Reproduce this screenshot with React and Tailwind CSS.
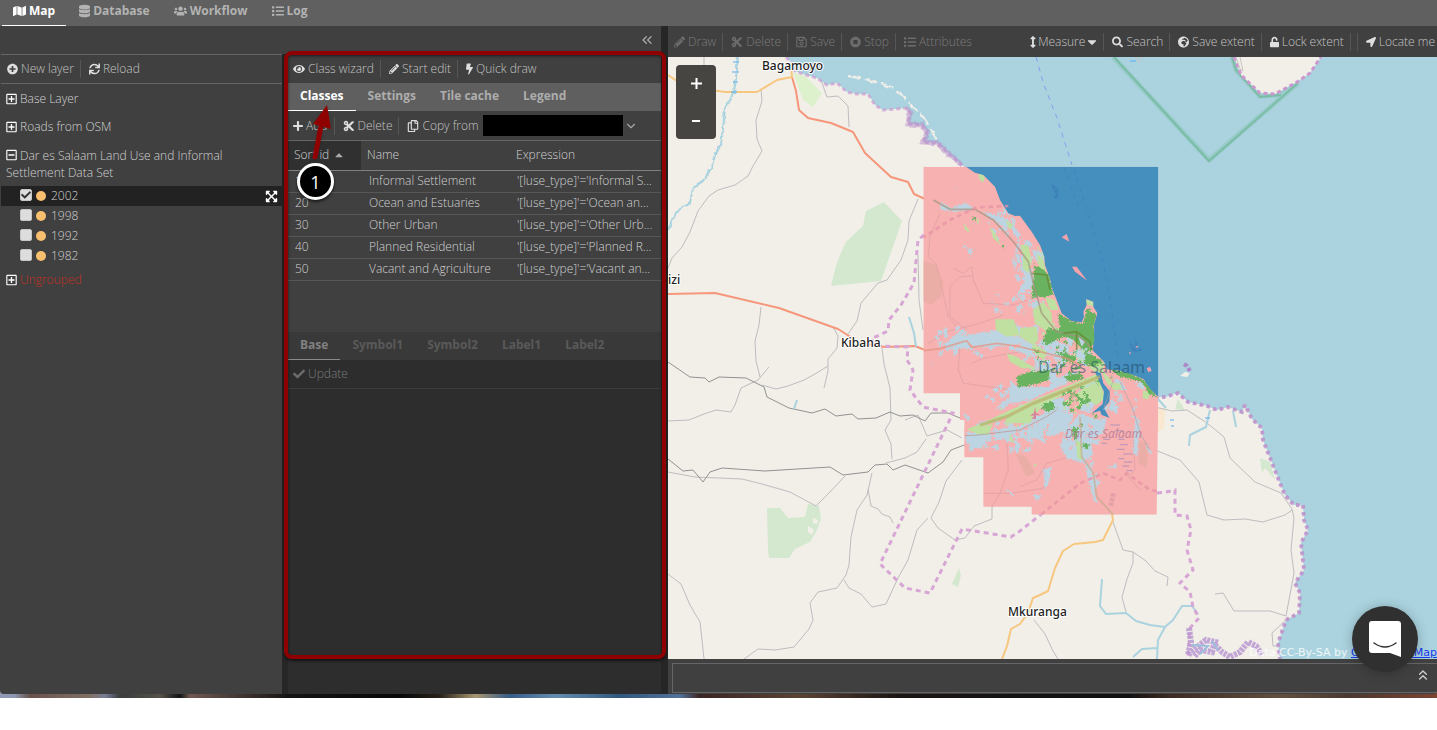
import React from "react";
import {
  FaMap, FaDatabase, FaUsers, FaList, FaPlusCircle, FaSync, FaEye, FaPencilAlt, FaBolt,
  FaPlus, FaCut, FaRegCopy, FaCheck, FaExpandArrowsAlt, FaRegPlusSquare, FaRegMinusSquare,
  FaSearch, FaGlobeAfrica, FaUnlock, FaLocationArrow, FaRegSave, FaArrowsAltV, FaCaretDown,
  FaStopCircle, FaCaretUp,
} from "react-icons/fa";
import { ChevronDown, ChevronsLeft, ChevronsUp } from "lucide-react";

function Tool({ icon: Icon, iconWidth = "w-[11px]", pad = "pl-2 pr-1.5", children, last = false, disabled = false }) {
  return (
    <button
      type="button"
      disabled={disabled}
      className={`flex h-[18px] shrink-0 items-center gap-[3px] whitespace-nowrap ${pad} ${last ? "" : "border-r border-[#565656]"} ${disabled ? "text-[#7b7b7b]" : "text-[#c4c4c4]"}`}
    >
      <Icon className={`h-3 ${iconWidth} ${disabled ? "text-[#6c6c6c]" : "text-[#dedede]"}`} />
      {children}
    </button>
  );
}

function MainTab({ icon: Icon, iconWidth, active = false, children }) {
  return (
    <button
      type="button"
      className={`flex h-[26px] items-center gap-[3px] border-b px-[11px] pb-1 font-bold ${active ? "border-white text-white" : "border-transparent text-[#b3b3b3]"}`}
    >
      <Icon className={`h-3.5 ${iconWidth}`} />
      {children}
    </button>
  );
}

function Layer({ name, checked = false }) {
  return (
    <li className={`flex h-5 items-center justify-between pr-1 pl-[19px] ${checked ? "bg-[#222222]" : ""}`}>
      <label className="flex items-center">
        <span className="relative mb-[3px] block size-3">
          <input
            type="checkbox"
            defaultChecked={checked}
            className="peer block size-3 appearance-none rounded-[2px] border border-[#c5c5c5] bg-[#dddddd]"
          />
          <FaCheck className="pointer-events-none absolute inset-0 m-auto hidden size-2.5 text-[#333333] peer-checked:block" />
        </span>
        <span className="mr-[5px] ml-1 size-2.5 rounded-full bg-[#f8bf6e]" />
        {name}
      </label>
      {checked && <FaExpandArrowsAlt className="size-[13px] text-white" />}
    </li>
  );
}

const groupClass = "flex items-center gap-[3px] text-left";

function LayerPanel() {
  return (
    <aside className="flex w-[282px] shrink-0 flex-col pl-px">
      <div className="flex h-[30px] items-center border-y border-[#666666]">
        <Tool icon={FaPlusCircle} pad="pl-1.5 pr-1.5">New layer</Tool>
        <Tool icon={FaSync} last>Reload</Tool>
      </div>
      <ul className="flex flex-col pt-[7px]">
        <li className="h-7 px-[5px]">
          <button type="button" className={groupClass}>
            <FaRegPlusSquare className="h-3 w-[11px] text-white" />Base Layer
          </button>
        </li>
        <li className="h-7 px-[5px]">
          <button type="button" className={groupClass}>
            <FaRegPlusSquare className="h-3 w-[11px] text-white" />Roads from OSM
          </button>
        </li>
        <li>
          <button type="button" className="px-[5px] text-left leading-[17px]">
            <FaRegMinusSquare className="mr-[3px] inline h-3 w-[11px] align-[-1px] text-white" />
            Dar es Salaam Land Use and Informal Settlement Data Set
          </button>
          <ul className="mt-[5px]">
            <Layer name="2002" checked />
            <Layer name="1998" />
            <Layer name="1992" />
            <Layer name="1982" />
          </ul>
        </li>
        <li className="mt-1.5 px-[5px] text-[#c0301f]">
          <button type="button" className={groupClass}>
            <FaRegPlusSquare className="h-3 w-[11px] text-white" />Ungrouped
          </button>
        </li>
      </ul>
    </aside>
  );
}

const classes = [
  ["10", "Informal Settlement", "'[luse_type]'='Informal S..."],
  ["20", "Ocean and Estuaries", "'[luse_type]'='Ocean an..."],
  ["30", "Other Urban", "'[luse_type]'='Other Urb..."],
  ["40", "Planned Residential", "'[luse_type]'='Planned R..."],
  ["50", "Vacant and Agriculture", "'[luse_type]'='Vacant an..."],
];

function SubTab({ active = false, muted = false, children }) {
  const tone = muted
    ? active ? "border-[#8a8a8a] text-[#818181]" : "border-transparent text-[#595959]"
    : active ? "border-white text-white" : "border-transparent text-[#adadad]";
  return <button type="button" className={`border-b px-3 pb-0.5 font-bold ${tone}`}>{children}</button>;
}

function ClassPanel() {
  return (
    <section className="relative flex min-w-0 flex-1 flex-col border-r-[7px] border-l-[6px] border-[#262626] bg-[#2d2d2d]">
      <div className="flex h-[29px] items-center bg-[#404040]">
        <Tool icon={FaEye} iconWidth="w-3" pad="pl-[5px] pr-1.5">Class wizard</Tool>
        <Tool icon={FaPencilAlt} iconWidth="w-2.5">Start edit</Tool>
        <Tool icon={FaBolt} iconWidth="w-[7px]" last>Quick draw</Tool>
      </div>
      <div className="flex h-7 bg-[#5f5f5f]">
        <SubTab active>Classes</SubTab>
        <SubTab>Settings</SubTab>
        <SubTab>Tile cache</SubTab>
        <SubTab>Legend</SubTab>
      </div>
      <div className="flex h-[30px] items-center border-b border-[#666666] bg-[#404040]">
        <Tool icon={FaPlus} iconWidth="w-2.5" pad="pl-[5px] pr-1.5">Add</Tool>
        <Tool icon={FaCut} iconWidth="w-3">Delete</Tool>
        <label htmlFor="copy-from" className="flex items-center gap-[3px] pr-1 pl-2 text-[#c4c4c4]">
          <FaRegCopy className="size-3 text-[#dedede]" />
          Copy from
        </label>
        <select id="copy-from" className="h-[21px] w-[140px] appearance-none bg-black" />
        <ChevronDown className="ml-px size-3.5 text-[#a5a5a5]" strokeWidth={2} />
      </div>
      <div className="h-[191px] bg-[#404040]">
        <table className="w-full table-fixed border-collapse text-left">
          <colgroup>
            <col className="w-[73px]" />
            <col className="w-[148px]" />
            <col />
          </colgroup>
          <thead>
            <tr className="h-[29px] border-b border-[#808080]">
              <th className="bg-[#303030] pl-1.5 font-light">
                <span className="flex items-center gap-1">Sort id <FaCaretUp className="size-3 text-[#aaaaaa]" /></span>
              </th>
              <th className="pl-1.5 font-light">Name</th>
              <th className="pl-[7px] font-light">Expression</th>
            </tr>
          </thead>
          <tbody>
            {classes.map(([id, name, expression]) => (
              <tr key={id} className="h-[22px] border-b border-[#575757]">
                <td className="pl-[7px]">{id}</td>
                <td className="pl-2">{name}</td>
                <td className="pl-2 whitespace-nowrap">{expression}</td>
              </tr>
            ))}
          </tbody>
        </table>
      </div>
      <div className="flex h-7 bg-[#393939]">
        <SubTab active muted>Base</SubTab>
        <SubTab muted>Symbol1</SubTab>
        <SubTab muted>Symbol2</SubTab>
        <SubTab muted>Label1</SubTab>
        <SubTab muted>Label2</SubTab>
      </div>
      <div className="flex h-[29px] items-center border-b border-[#3d3d3d]">
        <Tool icon={FaCheck} iconWidth="w-3" pad="pl-[5px]" last disabled>Update</Tool>
      </div>
      <div className="pointer-events-none absolute -top-[3px] -right-[5px] bottom-[35px] -left-1 rounded-lg border-4 border-[#8f0000] shadow-[0_2px_3px_rgba(0,0,0,0.6),inset_0_1px_3px_rgba(0,0,0,0.6)]" />
      <svg className="pointer-events-none absolute top-[50px] left-4 drop-shadow" width="36" height="60" viewBox="304 105 36 60" aria-hidden="true">
        <path d="M315 158L321 127" stroke="#8f0000" strokeWidth="5" strokeLinecap="round" />
        <path d="M327 106L313 125L331 130Z" fill="#8f0000" />
      </svg>
      <span className="absolute top-[109px] left-[9px] flex size-[37px] items-center justify-center rounded-full border-[3px] border-white bg-black text-lg font-normal text-white shadow-[0_2px_3px_rgba(0,0,0,0.6)]">1</span>
    </section>
  );
}

/* Small irregular parcels scattered over an ellipse: [cx, cy, rx, ry, count, size]. */
function parcels(zones, seed) {
  let state = seed;
  const random = () => {
    state = (state * 16807) % 2147483647;
    return state / 2147483647;
  };
  let d = "";
  for (const [cx, cy, rx, ry, count, size] of zones) {
    for (let i = 0; i < count; i += 1) {
      const turn = random() * Math.PI * 2;
      const reach = Math.sqrt(random());
      const x = cx + Math.cos(turn) * rx * reach;
      const y = cy + Math.sin(turn) * ry * reach;
      const points = [];
      for (let k = 0; k < 6; k += 1) {
        const angle = (k / 6) * Math.PI * 2;
        const r = size * (0.3 + random() * 0.9);
        points.push(`${Math.round(x + Math.cos(angle) * r)} ${Math.round(y + Math.sin(angle) * r)}`);
      }
      d += `M${points.join("L")}Z`;
    }
  }
  return d;
}

const settlements = parcels([
  [165, 575, 65, 45, 34, 8], [310, 225, 45, 50, 26, 8], [370, 330, 28, 80, 26, 8], [390, 460, 50, 40, 24, 8],
  [440, 610, 80, 55, 34, 11], [350, 740, 90, 40, 26, 9], [330, 850, 110, 50, 44, 11], [470, 820, 70, 50, 26, 12],
  [540, 860, 60, 70, 30, 10], [270, 590, 70, 30, 18, 9], [640, 750, 30, 40, 9, 7], [710, 820, 12, 90, 10, 6],
  [240, 870, 50, 30, 16, 9], [580, 980, 20, 60, 12, 7], [205, 300, 20, 20, 4, 5], [290, 460, 40, 30, 8, 5],
], 71);
const openLand = parcels([
  [400, 650, 70, 50, 14, 5], [480, 550, 50, 40, 14, 6], [350, 800, 70, 40, 14, 5], [540, 740, 60, 50, 24, 6],
  [480, 480, 60, 60, 12, 5], [550, 590, 40, 50, 16, 6], [420, 310, 15, 50, 8, 5],
], 133);
const planned = parcels([
  [520, 600, 50, 60, 24, 7], [530, 745, 50, 40, 22, 8], [500, 660, 50, 30, 16, 6], [420, 640, 25, 25, 6, 4], [600, 690, 40, 20, 6, 4],
], 29);
const gaps = parcels([
  [430, 620, 90, 60, 20, 6], [300, 820, 120, 60, 24, 7], [500, 850, 80, 50, 16, 6], [390, 480, 60, 60, 20, 6],
  [520, 590, 50, 60, 14, 5], [540, 740, 60, 50, 12, 5], [170, 575, 60, 35, 10, 6],
], 977);

/* Each region group is drawn on its own grid, three units to a map pixel. */
function MapDrawing() {
  const coast = "M786 57L792 63L795 71L803 74L817 78L827 85L837 83L847 92L857 94L868 94L875 105L883 110L907 108L910 113L908 124L922 125L927 132L923 142L937 143L950 155L962 165L972 173L995 190L1008 213L1020 216L1040 245L1045 270L1055 305L1085 322L1090 300L1095 340L1105 362L1130 375L1155 397L1165 397L1178 393L1188 402L1207 406L1217 410L1228 407L1242 412L1245 405L1252 419L1262 428L1263 440L1280 483L1285 495L1294 505L1303 505L1304 520L1308 530L1301 543L1304 570L1295 583L1300 593L1299 613L1286 620L1278 643L1280 659";
  const eastCoast = "M1155 397L1165 397L1178 393L1188 402L1207 406L1217 410L1228 407L1242 412L1245 405L1252 419L1262 428L1263 440L1280 483L1285 495L1294 505L1303 505L1304 520L1308 530L1301 543L1304 570L1295 583L1300 593L1299 613L1286 620L1278 643L1280 659";
  return (
    <svg className="block h-full w-full" viewBox="668 57 769 602" preserveAspectRatio="xMinYMin slice" fill="none" role="img" aria-label="Map of Dar es Salaam">
      <defs>
        <filter id="ragged" x="-5%" y="-5%" width="110%" height="110%">
          <feTurbulence type="fractalNoise" baseFrequency="0.16" numOctaves="3" seed="4" result="n" />
          <feDisplacementMap in="SourceGraphic" in2="n" scale="16" xChannelSelector="R" yChannelSelector="G" />
        </filter>
        <filter id="rough" x="-5%" y="-5%" width="110%" height="110%">
          <feTurbulence type="fractalNoise" baseFrequency="0.2" numOctaves="2" seed="9" result="n" />
          <feDisplacementMap in="SourceGraphic" in2="n" scale="4" xChannelSelector="R" yChannelSelector="G" />
        </filter>
        <clipPath id="survey"><path d="M70 50H775V738L770 1094H395V1070H250V922H193V810H180V730H70Z" /></clipPath>
      </defs>
      <rect x="668" y="57" width="769" height="602" fill="#aad3df" />
      <path d={`${coast}L668 659V57Z`} fill="#f2efe9" />

      {/* parks */}
      <g fill="#d3e8cf">
        <path d="M884 202L902 221L881 281L831 286L836 266L840 255L846 242L863 226L866 211Z" />
        <path d="M767 508L780 508L788 518L805 517L808 504L819 506L821 519L816 532L810 542L795 549L789 558L769 558L768 550Z" />
        <path d="M959 568L961 575L958 587L952 584Z" />
        <path d="M1260 458L1270 462L1275 480L1265 468L1262 473Z" />
        <path d="M1178 399L1185 410L1175 409Z" />
      </g>
      <path d="M813 518l5 2-1 4-4-1zM808 526l6 4-2 5-4-3z" fill="#f2efe9" />
      <path d="M793 73L805 76L822 93L813 107L803 100Z" fill="#def1cd" />
      <path d="M1155 405L1165 410L1164 428L1156 433Z" fill="#f9e7d0" />

      {/* minor roads and railways */}
      <g stroke="#bdbdbf" strokeWidth="1">
        <path d="M704 57V88" />
        <path d="M761 89L762 101L756 120L757 139L762 151L753 166L748 176L735 185L718 190L709 196L698 211L690 232L682 247L672 258L668 268" />
        <path d="M821 80L827 97L838 96L848 106L849 127" />
        <path d="M918 199L909 221L908 240L901 260L887 280L878 283L861 303L857 321L848 334" />
        <path d="M761 307L759 325L755 341L756 361L760 377M833 327L838 336L837 348L828 359L828 371L824 388M828 366L815 374L804 380L788 386L776 389L762 385M769 367L758 380L741 388L735 405L731 412L716 410L704 414L689 420L668 421" />
        <path d="M882 348L884 364L890 388L891 420L885 430L891 444L892 459M668 472L695 477L742 479L762 484L790 492L816 506L828 494L845 476" />
        <path d="M872 473L867 495L857 510L851 537L849 565L846 575L837 588L818 592L810 603L813 620L809 629L794 647L775 650L758 649L744 659" />
        <path d="M844 580L849 588L861 594L872 607L886 604L898 578L908 560L917 530L928 518M668 574L681 584L690 605L700 622L702 640L704 659" />
        <path d="M962 460L946 481L939 502L931 518L938 528L955 540L965 538L974 526L992 519L992 507L1005 499M1113 522L1123 550L1133 552L1146 561L1155 571L1168 577L1167 586M1133 552L1133 563L1127 579L1122 597L1126 612M868 489L871 506L878 509L882 514L890 517L893 523" />
        <path d="M1155 407L1172 411L1187 410L1207 423L1224 437L1230 458L1255 482L1281 493L1292 509L1294 518L1291 550L1294 573L1286 616L1270 611L1234 611L1223 593L1215 594M1155 450L1180 460L1199 482L1207 515L1224 520L1245 519L1263 522L1285 515L1292 510" />
        <path d="M1034 620L1045 634L1053 651L1058 659" />
        <path d="M905 420L918 415L927 436L947 430L962 438M886 463L905 458L917 452L926 439" />
        <path d="M918 255L919 300L923 330M1286 620L1272 633L1273 646L1279 646" />
      </g>
      <g stroke="#929292" strokeWidth="1">
        <path d="M668 362L690 377L705 378L709 382L719 377L746 378L764 387L767 397L789 408L812 413L825 409L836 416L852 414L858 419L876 418L890 412L900 416L913 415L925 421L931 413L948 413L960 418" />
        <path d="M668 459L683 471L693 470L703 482L710 472L722 468L765 471L830 467L843 475L868 472L875 465L887 464L893 470L905 465L928 473L943 462L951 450L967 444" />
      </g>

      {/* primary roads */}
      <g stroke="#f6967a" strokeWidth="2" strokeLinejoin="round">
        <path d="M668 294L715 293L779 308L838 329L860 343L885 347L915 346L925 350" />
        <path d="M792 77L796 91L799 110L808 118L831 123L853 132L865 153L891 177L908 182L914 194L925 199" />
      </g>
      <g stroke="#f7c77f" strokeWidth="2" strokeLinejoin="round">
        <path d="M668 75L680 83L704 89L725 92L757 92L777 80L792 77L791 66" />
        <path d="M1112 514L1113 520L1103 540L1095 542L1074 544L1063 551L1055 568L1048 591L1040 595L1033 598L1028 613L1020 624L1011 629L1007 646L1002 659" />
      </g>

      {/* rivers */}
      <g stroke="#aad3df" strokeWidth="2" strokeLinejoin="round">
        <path filter="url(#rough)" d="M738 57L736 78L734 92L730 100L725 108L723 130L721 145L715 155L711 169L703 181L693 188L690 203L677 211L668 230" />
        <path d="M909 317L914 333L916 347M797 400L794 409M1102 579L1100 606L1106 614L1126 613L1136 621L1150 625L1165 627L1173 620L1182 606L1192 606L1198 614M1165 627L1158 640L1157 659M1157 648L1142 649L1133 657" />
        <path d="M1210 410L1206 427L1190 435L1189 446M1233 411L1236 427M1157 398L1166 408" />
      </g>
      <path d="M733 62h6M732 72h7M733 82h5M731 92h6M1170 420h4M1171 426h3M1205 418h5M1130 61h6" stroke="#5aaef0" strokeWidth="1" />

      {/* district and sea borders */}
      <path d={coast} stroke="#cc9fd4" strokeWidth="3" strokeDasharray="4 3" strokeLinejoin="round" opacity=".75" />
      <path d={eastCoast} stroke="#b68cc8" strokeWidth="4" strokeDasharray="3 4" opacity=".65" />
      <path d="M907 108L910 113L908 124L922 125L927 132L923 142L937 143L950 155L962 165" stroke="#b68cc8" strokeWidth="5" opacity=".5" filter="url(#rough)" />
      <g stroke="#d7a6d5" strokeWidth="3" strokeDasharray="5 4">
        <path d="M924 235L918 240L914 283L901 305L889 320L888 331L871 339L875 346L908 347L907 360L913 370L910 390L923 407L953 413L880 564L905 588L930 593L962 529L1011 537L1020 531L1078 485" />
        <path d="M1157 493L1166 492L1175 490L1175 515L1187 516L1191 530L1187 550L1193 570L1180 583L1190 592L1193 607L1199 618L1190 628L1188 657" />
      </g>
      <path d="M1189 628L1191 642L1188 655L1196 648L1206 640L1215 642L1212 652L1200 650L1194 657M1215 645L1222 652L1230 657L1240 652L1248 642L1256 646L1262 655" stroke="#b594cf" strokeWidth="6" strokeDasharray="3 1" opacity=".8" />
      <path d="M1192 645L1208 646L1200 654M1212 641L1218 650" stroke="#9bbfdc" strokeWidth="2" />

      {/* islands and marine features */}
      <path d="M848 76L868 80L894 88L912 105L925 119L937 140" stroke="#f2efe9" strokeWidth="2" strokeDasharray="13 4" filter="url(#rough)" />
      <path d="M1113 57L1209 160L1298 83M1232 57L1236 70L1260 96L1281 95L1298 83" stroke="#79bea4" strokeWidth="5" opacity=".35" />
      <path d="M1114 57L1209 161L1298 83M1232 57L1236 70L1260 97L1281 95" stroke="#70b89a" strokeWidth="2" opacity=".75" />
      <path d="M1234 57L1241 75L1260 93L1275 94L1297 82L1310 73L1321 57Z" fill="#f2efe9" />
      <path d="M1234 57L1241 75L1260 93L1275 94L1297 82L1310 73L1321 57" stroke="#cc96d0" strokeWidth="3" strokeDasharray="4 3" />
      <path d="M1236 57L1240 69L1243 71L1240 57M1136 57l3 5 3-5" stroke="#c7c5c3" />
      <path d="M1036 57L1044 85L1057 118L1072 165" stroke="#8d9cec" strokeDasharray="5 5" />
      <path d="M1180 376L1185 372L1190 373L1187 377Z" fill="#f2efe9" />
      <path d="M1184 364L1187 366L1190 371" stroke="#ad88c8" strokeWidth="4" strokeDasharray="4 2" />

      {/* land use survey */}
      <g transform="translate(900 150) scale(.33333)">
        <g clipPath="url(#survey)">
          <rect x="60" y="40" width="720" height="1060" fill="#f6b1b0" />
          <g stroke="#dc9ea4" strokeWidth="3" opacity=".65">
            <path d="M120 190L90 260L85 320L110 345L145 500L170 530M160 355L190 370L215 350L220 390L250 460L340 465L430 435M150 410L180 380L215 378M150 410L150 500L200 540M180 590L175 660L190 700L340 720M215 640L250 625L330 610L410 600M320 860L325 960L300 1030L275 1070M360 1010L410 990L440 940L510 920M240 1030L330 1030L430 1015L450 960M700 870L705 960L685 980L720 1020M85 580L140 545L240 520L310 495" />
          </g>
          <path d="M65 330L110 345L130 400L125 440L90 465L65 450Z M345 910L380 920L405 970L380 980Z M715 870L745 880L740 955L715 940Z" fill="#e4aca0" opacity=".6" />
          <g fill="#bdd5e2" filter="url(#ragged)">
            <path d="M125 155L150 175L195 160L225 175L190 182L150 183L120 178Z M250 185L310 200L340 225L365 260L350 262L330 230L300 225L280 210Z" />
            <path d="M365 310L392 350L400 390L390 430L365 425L345 445L375 390L362 350Z M395 300L430 305L435 330L410 335Z" />
            <path d="M130 585L150 570L190 535L200 560L250 545L300 540L360 560L390 580L280 590L215 590L160 600Z M325 520L390 535L420 520L410 560L350 555Z M280 470L300 480L285 490Z M405 450L430 465L415 500L395 470Z" />
            <path d="M355 590L460 570L500 585L520 620L490 640L440 610L400 620L340 600Z M400 625L440 635L480 690L455 700L410 650Z M520 600L560 595L580 620L560 650L530 630Z" />
            <path d="M330 690L350 710L445 710L480 680L540 660L500 700L400 745L310 770L280 780L330 740Z M430 740L490 745L510 780L460 790L430 770Z" />
            <path d="M200 855L250 840L280 850L240 890L210 905Z M250 850L330 830L370 850L350 880L300 870Z M380 830L430 830L420 870L380 860Z M400 800L470 780L520 790L500 840L450 860L430 835Z" />
            <path d="M500 840L540 790L590 810L620 805L610 850L570 870L580 910L550 940L500 925L480 890Z M540 700L590 690L600 730L570 790L540 780Z" />
            <path d="M635 745L655 770L650 790L625 780Z M640 680L665 695L680 720L655 720Z M705 695L735 700L730 720L715 710Z M705 795L720 830L710 920L700 905Z M555 935L575 955L580 990L600 1000L580 1020L595 1060L580 1050L560 970Z M430 960L455 950L450 985L435 1020Z M320 1020L335 1025L345 1045Z M400 1035L425 1035L410 1055Z M620 955L650 940L650 955Z M190 790L210 800L205 815Z" />
            <path d="M200 290L218 305L208 318Z M90 650L100 630L95 645Z M335 320L352 340L345 360Z M740 880L755 910L745 912Z M365 900L395 890L385 910Z M165 105L172 110L170 117Z M340 230L360 250L340 258Z M265 740L285 745L280 760Z" />
            <path d={settlements} />
          </g>
          <path d={gaps} fill="#f6b1b0" filter="url(#ragged)" />
          <g fill="#bfe0a0" filter="url(#rough)">
            <path d="M235 65L255 80L250 98L238 88Z M190 218L203 235L210 248L196 240Z M268 228L285 250L302 285L280 265Z M230 205L238 210L232 225Z M315 210L340 225L330 240Z" />
            <path d="M362 285L385 285L395 335L385 370L368 355L370 320Z M285 508L340 508L360 555L320 560L288 540Z M360 535L410 530L415 570L400 585L360 560Z M398 480L430 455L455 490L458 530L440 545L405 520Z M435 440L465 450L475 480L450 480Z M400 580L440 605L430 630L395 600Z M320 610L350 620L405 655L365 655L330 635Z" />
            <path d="M460 530L505 540L500 550L470 555Z M410 310L430 330L440 375L420 365Z M580 620L615 640L600 675L570 655Z M600 650L640 700L660 710L650 722L620 700Z M530 730L600 690L615 745L590 765L560 750L540 775Z" />
            <path d="M200 838L250 818L330 780L590 672L600 690L500 730L430 765L400 800L390 820L315 820L320 800L250 830L240 855Z M240 835L278 822L265 855L235 850Z M330 850L342 880L328 870Z M528 870L545 880L545 930L533 925Z M730 720L750 730L745 748L728 745Z M655 655L690 670L660 675Z M635 700L660 700L665 718L640 720Z M405 940L412 945L400 950Z" />
            <path d={openLand} />
          </g>
          <g fill="#69b25f" filter="url(#ragged)">
            <path d="M405 345L440 365L455 400L460 430L440 442L415 440L395 445L400 390Z M475 490L520 515L550 520L560 475L590 495L580 530L590 580L550 600L520 570L490 560L440 585L425 575L445 535L480 540Z" />
            <path d="M350 680L385 665L450 660L445 690L400 705L355 712Z M430 760L455 755L470 775L440 785L425 775Z M490 610L530 620L520 640L485 630Z M560 605L610 635L580 650L550 640Z M490 680L540 670L555 685L510 695Z" />
            <path d="M625 655L690 670L735 690L770 740L750 735L725 695L660 680Z M515 830L535 835L530 875L518 860Z M550 880L570 885L565 895L545 892Z M540 820L548 825L545 840Z M575 790L595 800L590 808Z M218 198L228 205L220 212Z M305 288L315 285L312 298Z M395 595L420 605L412 612Z" />
            <path d={planned} />
          </g>
          <path d="M500 560L520 570L515 590L505 585Z M535 560L555 575L545 590Z M530 600L545 615L540 625Z" fill="#bdd5e2" filter="url(#rough)" />
          <path d="M560 447L580 455L580 470L557 462Z" fill="#bfe0a0" />
          <path d="M190 45L225 68L250 75L285 110L300 150L325 190L345 198L360 197L395 245L420 285L433 320L435 345L450 385L458 420L470 450L485 490L515 513L545 517L552 500L550 485L560 465L558 447L580 455L580 470L592 490L582 525L583 570L577 600L612 635L622 658L660 662L700 675L730 687L752 718L772 738H785V40Z" fill="#458fbf" />
          <path d="M585 665L602 668L610 700L630 725L628 755L612 775L628 803L605 795L600 782L575 790L608 762L612 725L600 700Z" fill="#458fbf" filter="url(#rough)" />
          <g fill="#f3a2ac">
            <path d="M485 262L500 252L508 275Z M516 350L530 350L562 392L525 365Z M740 655L750 650L755 662L745 667Z M688 605l6 4-6 4zM705 588l12 1-8 4z" />
          </g>
          <g stroke="#3c7cb8" strokeWidth="6" opacity=".8" filter="url(#ragged)"><path d="M455 105L470 120L465 145L475 130M690 575L700 600L725 600M705 570L710 590" /></g>
          <path d="M505 5L560 180L610 340L630 450L655 630M470 0L540 180" stroke="#3a7bc2" strokeWidth="3" strokeDasharray="14 14" opacity=".55" />
          <g stroke="#b1a87c" strokeWidth="5" opacity=".7">
            <path d="M100 150L150 178L225 178L280 210L340 275L385 335L400 400L425 490L470 545L540 560L580 600" stroke="#a4937e" />
            <path d="M70 602L120 596L200 572L215 592L290 580L350 588L420 605L500 625L540 645" stroke="#e39281" />
            <path d="M240 825L320 800L400 760L600 680" strokeWidth="10" stroke="#b9b06b" />
            <path d="M540 800L545 920L580 970L590 1040L645 1100" stroke="#c6a98d" />
          </g>
          <path d="M395 370L440 375L450 420M490 550L530 545L570 575L575 600M530 545V600" stroke="#64852e" strokeWidth="5" opacity=".7" />
          <path d="M185 858L235 855L360 840L440 800L470 780" stroke="#bba7a7" strokeWidth="3" />
          <path d="M65 265L150 210L230 172L325 168M365 1140L540 1000L610 970L660 990L680 970L750 1020L785 1025" stroke="#e793a6" strokeWidth="8" strokeDasharray="14 11" opacity=".75" />
          <path d="M640 1030L632 1070" stroke="#dc98a6" strokeWidth="14" strokeDasharray="10 4" opacity=".7" />
          <path d="M630 825h30M645 842h25M655 868h18M660 884h24M650 898h24M670 912h28M655 926h18M672 936h26M668 948h20M680 962h18M610 868h20M605 880h16" stroke="#b793b8" strokeWidth="3" />
          <path d="M660 695L700 780L720 850L750 900M640 690L610 780" stroke="#a6a2ae" strokeWidth="3" opacity=".6" />
          <path d="M405 770L408 788L422 796L408 796L408 808L395 806L403 797L390 797L402 788Z" fill="#d9869c" />
        </g>
      </g>

      {/* place names */}
      <g className="font-['Noto_Sans',sans-serif]" paintOrder="stroke">
        <g fontSize="12" className="font-medium" fill="#222" stroke="#fff" strokeWidth="2" strokeLinejoin="round">
          <text x="762" y="70">Bagamoyo</text>
          <text x="841" y="347">Kibaha</text>
          <text x="1008" y="616">Mkuranga</text>
          <text x="668" y="284">izi</text>
        </g>
        <text x="1038" y="373" fontSize="16" className="font-normal" fill="#1e4663" fillOpacity=".55">Dar es Salaam</text>
        <text x="1065" y="438" fontSize="12" className="font-normal" fontStyle="italic" fill="#b37895" fillOpacity=".8">Dar es Salaam</text>
      </g>
    </svg>
  );
}

function MapPanel() {
  return (
    <main className="flex min-w-0 flex-1 flex-col overflow-hidden">
      <div className="flex h-[31px] shrink-0 items-center justify-between">
        <div className="flex">
          <Tool icon={FaPencilAlt} pad="pl-1.5 pr-1.5" disabled>Draw</Tool>
          <Tool icon={FaCut} iconWidth="w-3" disabled>Delete</Tool>
          <Tool icon={FaRegSave} disabled>Save</Tool>
          <Tool icon={FaStopCircle} disabled>Stop</Tool>
          <Tool icon={FaList} iconWidth="w-3" disabled last>Attributes</Tool>
        </div>
        <div className="flex">
          <button type="button" className="flex h-[18px] items-center gap-0.5 border-r border-[#565656] pr-1.5 text-[#c4c4c4]">
            <FaArrowsAltV className="h-3 w-1.5 text-[#dedede]" />Measure<FaCaretDown className="h-3.5 w-2.5 text-[#dedede]" />
          </button>
          <Tool icon={FaSearch}>Search</Tool>
          <Tool icon={FaGlobeAfrica}>Save extent</Tool>
          <Tool icon={FaUnlock} iconWidth="w-[9px]">Lock extent</Tool>
          <span className="w-[7px] border-r border-[#565656]" />
          <Tool icon={FaLocationArrow} iconWidth="w-2.5" pad="pl-2 pr-0.5" last>Locate me</Tool>
        </div>
      </div>
      <div className="relative min-h-0 flex-1 overflow-hidden">
        <MapDrawing />
        <div className="absolute top-2 left-2 flex h-[74px] w-10 flex-col rounded bg-[#474542]">
          <button type="button" aria-label="Zoom in" className="flex flex-1 items-center justify-center text-white">
            <svg viewBox="0 0 11 11" className="size-[11px]" fill="none" stroke="currentColor" strokeWidth="2"><path d="M0 5.5H11M5.5 0V11" /></svg>
          </button>
          <button type="button" aria-label="Zoom out" className="flex flex-1 items-center justify-center text-white">
            <svg viewBox="0 0 8 8" className="size-2" fill="none" stroke="currentColor" strokeWidth="2"><path d="M0 4H8" /></svg>
          </button>
        </div>
        <p className="absolute right-0 bottom-0 font-[DejaVu_Sans,sans-serif] text-[11px] leading-3 font-normal whitespace-nowrap text-white/80">
          Data CC-By-SA by <a href="#osm" className="text-[#1a35ee] underline">OpenStreetMap</a>
        </p>
      </div>
      <div className="h-[35px] shrink-0 pt-1 pb-px pl-1">
        <div className="flex h-[30px] items-center justify-end border-y border-l border-[#666666] pr-1.5">
          <button type="button" aria-label="Expand panel"><ChevronsUp className="mb-1.5 size-4 text-[#d0d0d0]" strokeWidth={2} /></button>
        </div>
      </div>
    </main>
  );
}

export default function App() {
  return (
    <div className="flex h-screen min-h-[600px] flex-col bg-white pb-8 font-['Open_Sans',sans-serif] text-xs font-light text-[#d2d2d2]">
      <div className="relative flex min-h-0 flex-1 flex-col bg-[linear-gradient(90deg,#8f98b3_0,#8f98b3_14px,#68534c_30px,#817064_90px,#777e96_105px,#393d3c_120px,#55504a_160px,#151515_180px,#705950_190px,#4a3c3a_230px,#151412_290px,#080808_400px,#27211a_440px,#a99670_475px,#355b88_510px,#658caf_555px,#31577e_620px,#53719b_680px,#3a2524_700px,#5c4234_800px,#191513_900px,#111_1128px,#3d2a22_1170px,#62503f_1280px,#4a382f_1350px,#7c4431_1437px)] pb-1">
        <div className="flex min-h-0 flex-1 flex-col rounded-b bg-[#404040]">
          <nav className="flex h-[26px] shrink-0 gap-0.5 bg-[#606060] pl-0.5">
            <MainTab icon={FaMap} iconWidth="w-[13px]" active>Map</MainTab>
            <MainTab icon={FaDatabase} iconWidth="w-[11px]">Database</MainTab>
            <MainTab icon={FaUsers} iconWidth="w-[13px]">Workflow</MainTab>
            <MainTab icon={FaList} iconWidth="w-3">Log</MainTab>
          </nav>
          <div className="flex min-h-0 flex-1">
            <div className="flex w-[668px] shrink-0 flex-col">
              <div className="flex h-7 shrink-0 items-center justify-end border-r-[7px] border-[#262626] pr-1.5">
                <button type="button" aria-label="Collapse panel"><ChevronsLeft className="size-4 text-[#a8a8a8]" strokeWidth={2} /></button>
              </div>
              <div className="flex min-h-0 flex-1">
                <LayerPanel />
                <ClassPanel />
              </div>
            </div>
            <MapPanel />
          </div>
        </div>
        <button type="button" aria-label="Open chat" className="absolute right-[19px] bottom-[26px] flex size-[66px] items-center justify-center rounded-full bg-[#303030] shadow-[0_1px_12px_rgba(0,0,0,0.25)]">
          <svg viewBox="0 0 32 36" className="h-9 w-8" fill="none">
            <path d="M3 0H29Q32 0 32 3V36L21 32H3Q0 32 0 29V3Q0 0 3 0Z" fill="#fff" />
            <path d="M5 22Q16 30 27 22" stroke="#303030" strokeWidth="1.5" strokeLinecap="round" />
          </svg>
        </button>
      </div>
    </div>
  );
}
